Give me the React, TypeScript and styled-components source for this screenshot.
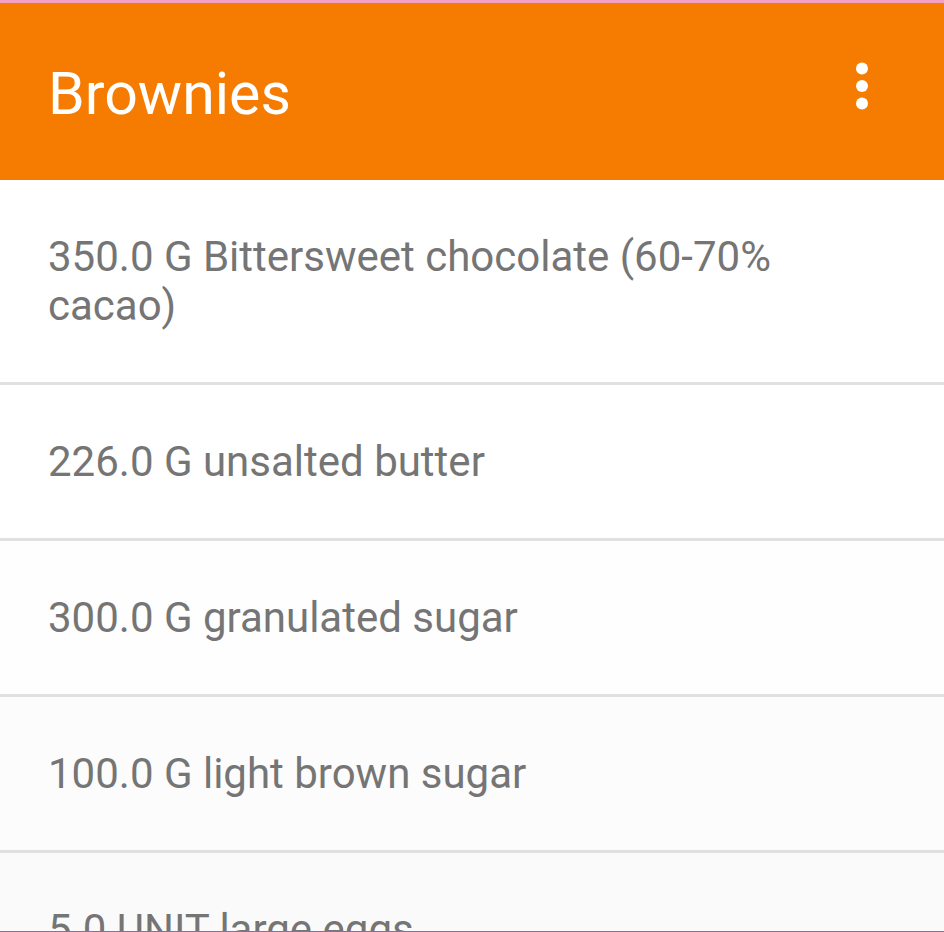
import React from "react";
import styled, { createGlobalStyle } from "styled-components";

const Global = createGlobalStyle`
  html, body { margin: 0; padding: 0; background: #ffffff; }
  body { font-family: Roboto, "Noto Sans", "Liberation Sans", sans-serif; }
  * { box-sizing: border-box; }
`;

const Screen = styled.div`
  width: 944px;
  height: 932px;
  display: flex;
  flex-direction: column;
  overflow: hidden;
  background: #ffffff;
`;

const StatusStrip = styled.div`
  height: 3px;
  flex: none;
  background: #f3a0c2;
`;

const AppBar = styled.header`
  height: 177px;
  flex: none;
  background: #f57c00;
  display: flex;
  align-items: center;
  justify-content: space-between;
  padding: 0 46px 0 48px;
`;

const Title = styled.h1`
  margin: 4px 0 0 0;
  font-family: Roboto, sans-serif;
  font-weight: 400;
  font-size: 59px;
  color: #ffffff;
  letter-spacing: 0;
`;

const MenuButton = styled.button`
  width: 72px;
  height: 72px;
  padding: 0;
  border: 0;
  background: transparent;
  display: flex;
  align-items: center;
  justify-content: center;
  margin-bottom: 12px;
`;

const List = styled.ul`
  flex: 1;
  margin: 0;
  padding: 0;
  list-style: none;
  overflow: hidden;
`;

const Row = styled.li<{ $tint: string }>`
  padding: 52px 48px;
  background: ${(p) => p.$tint};
  border-bottom: 3px solid #e0e0e0;
  font-family: Roboto, sans-serif;
  font-size: 42px;
  line-height: 49px;
  color: #757575;
`;

const BottomEdge = styled.div`
  height: 1px;
  flex: none;
  background: #a8628f;
`;

const items: { text: string; tint: string }[] = [
  { text: "350.0 G Bittersweet chocolate (60-70% cacao)", tint: "#ffffff" },
  { text: "226.0 G unsalted butter", tint: "#ffffff" },
  { text: "300.0 G granulated sugar", tint: "#fefefe" },
  { text: "100.0 G light brown sugar", tint: "#fcfcfc" },
  { text: "5.0 UNIT large eggs", tint: "#fafafa" },
];

const MoreIcon = () => (
  <svg width="72" height="72" viewBox="0 0 72 72" aria-hidden="true">
    <circle cx="36" cy="18.5" r="6" fill="#ffffff" />
    <circle cx="36" cy="36" r="6" fill="#ffffff" />
    <circle cx="36" cy="53.5" r="6" fill="#ffffff" />
  </svg>
);

export default function App() {
  return (
    <>
      <Global />
      <Screen>
        <StatusStrip />
        <AppBar>
          <Title>Brownies</Title>
          <MenuButton aria-label="More options">
            <MoreIcon />
          </MenuButton>
        </AppBar>
        <List>
          {items.map((it) => (
            <Row key={it.text} $tint={it.tint}>
              {it.text}
            </Row>
          ))}
        </List>
        <BottomEdge />
      </Screen>
    </>
  );
}
